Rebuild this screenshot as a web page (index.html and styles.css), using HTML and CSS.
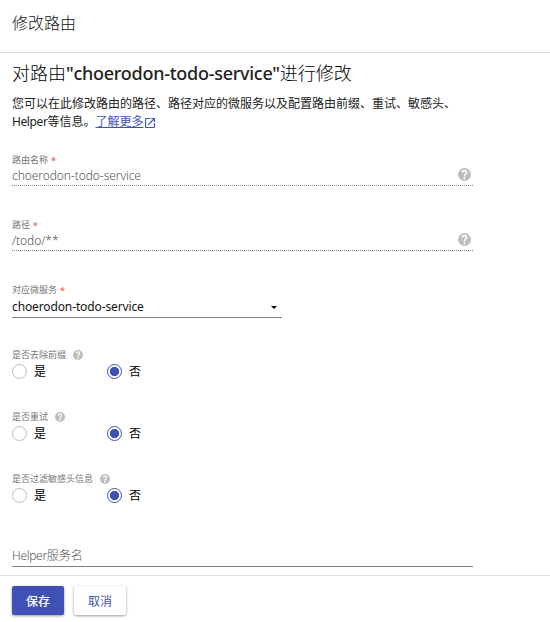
FILE: index.html
```html
<!DOCTYPE html>
<html lang="zh-CN">
<head>
<meta charset="utf-8">
<title>修改路由</title>
<link rel="stylesheet" href="styles.css">
</head>
<body>
<svg class="defs" width="0" height="0">
  <symbol id="help" viewBox="2 2 20 20"><path fill="currentColor" stroke="none" d="M12 2a10 10 0 1 0 0 20 10 10 0 0 0 0-20zm1.3 17.3h-2.6v-2.6h2.6zm2.07-8.05-.9.92C13.75 12.9 13.3 13.5 13.3 15h-2.6v-.5c0-1.1.45-2.1 1.17-2.83l1.24-1.26A1.8 1.8 0 1 0 10.2 9H7.6a4.4 4.4 0 1 1 8.8 0c0 .88-.36 1.68-1.03 2.25z"/></symbol>
</svg>
<div class="page">
  <header class="header">修改路由</header>
  <main class="content">
    <h1 class="title">对路由<span class="name">"choerodon-todo-service"</span>进行修改</h1>
    <p class="description">您可以在此修改路由的路径、路径对应的微服务以及配置路由前缀、重试、敏感头、<br><span class="latin">Helper</span>等信息。<a class="more" href="#"><span class="more-text">了解更多</span><svg class="open" viewBox="3 3 18 18"><path fill="currentColor" d="M19 19H5V5h7V3H5a2 2 0 0 0-2 2v14a2 2 0 0 0 2 2h14a2 2 0 0 0 2-2v-7h-2zM14 3v2h3.59l-9.83 9.83 1.41 1.41L19 6.41V10h2V3z"/></svg></a></p>
    <div class="field disabled">
      <div class="label">路由名称<i class="required">*</i></div>
      <div class="value"><span>choerodon-todo-service</span><svg class="help"><use href="#help"/></svg></div>
    </div>
    <div class="field disabled">
      <div class="label">路径<i class="required">*</i></div>
      <div class="value"><span>/todo/**</span><svg class="help"><use href="#help"/></svg></div>
    </div>
    <div class="field select">
      <div class="label">对应微服务<i class="required">*</i></div>
      <div class="value"><span>choerodon-todo-service</span><b class="caret"></b></div>
    </div>
    <div class="group">
      <div class="label">是否去除前缀<svg class="help"><use href="#help"/></svg></div>
      <div class="options"><label class="option"><i class="radio"></i>是</label><label class="option"><i class="radio checked"></i>否</label></div>
    </div>
    <div class="group">
      <div class="label">是否重试<svg class="help"><use href="#help"/></svg></div>
      <div class="options"><label class="option"><i class="radio"></i>是</label><label class="option"><i class="radio checked"></i>否</label></div>
    </div>
    <div class="group">
      <div class="label">是否过滤敏感头信息<svg class="help"><use href="#help"/></svg></div>
      <div class="options"><label class="option"><i class="radio"></i>是</label><label class="option"><i class="radio checked"></i>否</label></div>
    </div>
    <div class="helper"><span class="latin">Helper</span>服务名</div>
  </main>
  <footer class="footer">
    <button class="button primary">保存</button>
    <button class="button">取消</button>
  </footer>
</div>
</body>
</html>
```
FILE: styles.css
```css
* { box-sizing: border-box; }
body {
  margin: 0;
  background: #fff;
  color: #000;
  font: 300 12px/18px "Noto Sans", "Noto Sans CJK SC", sans-serif;
}
.defs { position: absolute; }
.page { height: 622px; display: flex; flex-direction: column; overflow: hidden; }
.header {
  height: 53px;
  padding: 0 12px;
  border-bottom: 1px solid #dfdfdf;
  color: #111;
  font-size: 16px;
  line-height: 47px;
}
.content { height: 522px; padding: 8px 12px 0; white-space: nowrap; }
.title { margin: 0; font-size: 18px; font-weight: 300; line-height: 24px; color: #000; }
.name { font-weight: 500; letter-spacing: -.27px; color: #222; }
.description { margin: 10px 0 0; font-weight: 400; color: #222; }
.latin { letter-spacing: -.3px; }
.description .latin { letter-spacing: -.4px; }
.more { color: #3f51b5; text-decoration: none; }
.more-text { text-decoration: underline; }
.open { width: 10px; height: 10px; margin-left: 1px; vertical-align: -2px; }
.field { width: 461px; height: 65px; }
.description + .field { margin-top: 22px; }
.label {
  height: 12px;
  display: flex;
  align-items: center;
  padding-top: 1px;
  color: #777;
  font-size: 9px;
  font-weight: 400;
  line-height: 12px;
}
.required { margin-left: 3px; color: #f0706c; font: bold 9px/10px "Noto Sans", sans-serif; height: 10px; padding-top: 1px; }
.value {
  height: 20px;
  display: flex;
  align-items: center;
  justify-content: space-between;
  border-bottom: 1px solid #808080;
  line-height: 18px;
}
.value span { padding-top: 1px; }
.disabled .value { height: 21px; padding-right: 2px; padding-bottom: 1px; border-bottom-style: dotted; color: #555; letter-spacing: -.07px; }
.disabled .value span { line-height: 16px; padding-top: 2px; }
.disabled .value .help { width: 13px; height: 13px; }
.help { width: 10px; height: 10px; color: #bdbdbd; }
.select { width: 270px; height: 66px; }
.select .value { height: 23px; padding-right: 5px; font-weight: 400; letter-spacing: -.12px; color: #111; }
.select .value span { padding-top: 2px; }
.caret { margin-top: 2px; border: 3px solid transparent; border-top-color: #000; border-bottom: 0; }
.group { height: 62px; }
.group .label { padding-top: 0; }
.group .label .help { margin-left: 7px; }
.options { display: flex; margin-top: 3px; }
.option { width: 95px; height: 15px; display: flex; align-items: center; font-size: 12px; font-weight: 400; }
.radio { width: 15px; height: 15px; margin-right: 7px; border: 1px solid #bdbdbd; border-radius: 50%; }
.checked { border-color: #3f51b5; background: radial-gradient(circle, #3f51b5 4.3px, transparent 5px); }
.helper { width: 461px; height: 22px; margin-top: 10px; border-bottom: 1px solid #808080; color: #555; line-height: 22px; }
.footer { height: 47px; display: flex; gap: 10px; padding: 10px 12px; border-top: 1px solid #dfdfdf; }
.button {
  width: 52px;
  height: 29px;
  padding: 0;
  border: 0;
  border-radius: 2px;
  background: #fff;
  box-shadow: 0 1px 3px rgba(0, 0, 0, .4);
  color: #3f51b5;
  font: 12px/28px "Noto Sans CJK SC", sans-serif;
}
.primary { background: #3f51b5; color: #fff; font-weight: 500; }
```
